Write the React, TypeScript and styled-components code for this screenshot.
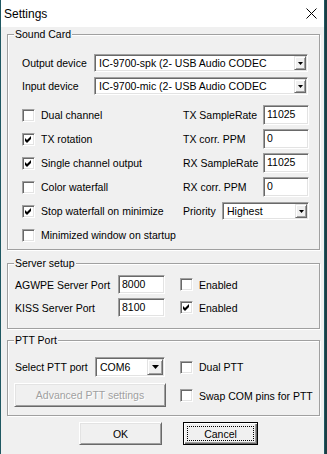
import styled, { createGlobalStyle } from 'styled-components'

const GlobalStyle = createGlobalStyle`
  html, body {
    margin: 0;
    padding: 0;
    background: #1b3d43;
  }
  body {
    font-family: "Liberation Sans", Arial, sans-serif;
    font-size: 10.5px;
    color: #000;
  }
`

const Window = styled.div`
  width: 323px;
  height: 454px;
  border-left: 1px solid #1f5862;
  border-right: 1px solid #1f5862;
  background: #f0f0f0;
  display: flex;
  flex-direction: column;
  overflow: hidden;
`

const TitleBar = styled.div`
  flex: none;
  height: 27px;
  background: #fff;
  display: flex;
  align-items: center;
  justify-content: space-between;
  padding: 0 7px 0 3px;
`

const Title = styled.span`
  font-size: 12px;
`

const Body = styled.div`
  padding: 1px 0 0 6px;
  display: flex;
  flex-direction: column;
`

const Group = styled.fieldset<{ gapTop?: number }>`
  width: 311px;
  margin: ${p => p.gapTop ?? 0}px 0 0 0;
  padding: 0;
  min-width: 0;
  border: 1px solid #a0a0a0;
  box-shadow: inset 1px 1px 0 #fff, 1px 1px 0 #fff;
`

const Legend = styled.legend`
  margin-left: 6px;
  padding: 0 1px;
  line-height: 13px;
  background: #f0f0f0;
`

const SoundBody = styled.div`
  padding: 13px 11px 2px 14px;
  display: flex;
  flex-direction: column;
  gap: 5px;
`

const DeviceRow = styled.div`
  display: flex;
  align-items: center;
`

const FieldLabel = styled.span<{ w?: number }>`
  width: ${p => (p.w ? `${p.w}px` : 'auto')};
  flex: none;
  white-space: nowrap;
`

const OptionGrid = styled.div`
  margin-top: 3px;
  display: grid;
  grid-template-columns: 161px 39px 41px 45px;
  grid-auto-rows: 24px;
  align-items: center;
`

const RightLabel = styled(FieldLabel)`
  grid-column: 2 / span 2;
`

const PriorityLabel = styled(FieldLabel)`
  grid-column: 2;
`

const PriorityCell = styled.div`
  grid-column: 3 / span 2;
`

const CheckRow = styled.label`
  display: flex;
  align-items: center;
  gap: 6px;
  height: 13px;
  white-space: nowrap;
`

const Box = styled.span`
  width: 11px;
  height: 11px;
  flex: none;
  background: #fff;
  border: 1px solid;
  border-color: #a0a0a0 #fff #fff #a0a0a0;
  box-shadow: inset 1px 1px 0 #696969, inset -1px -1px 0 #e3e3e3;
  display: flex;
  align-items: center;
  justify-content: center;
`

const Edit = styled.div<{ w: number; h?: number }>`
  width: ${p => p.w - 5}px;
  height: ${p => (p.h ?? 20) - 4}px;
  box-sizing: content-box;
  padding: 1px 0 1px 3px;
  background: #fff;
  border: 1px solid;
  border-color: #a0a0a0 #fff #fff #a0a0a0;
  box-shadow: inset 1px 1px 0 #696969, inset -1px -1px 0 #e3e3e3;
  line-height: 14px;
  white-space: nowrap;
  overflow: hidden;
`

const Combo = styled.div<{ w: number; h?: number }>`
  width: ${p => p.w - 4}px;
  height: ${p => (p.h ?? 18) - 4}px;
  box-sizing: content-box;
  padding: 1px;
  background: #fff;
  border: 1px solid;
  border-color: #a0a0a0 #fff #fff #a0a0a0;
  box-shadow: inset 1px 1px 0 #696969, inset -1px -1px 0 #e3e3e3;
  display: flex;
  align-items: center;
`

const ComboText = styled.span`
  flex: 1;
  padding-left: 3px;
  white-space: nowrap;
  overflow: hidden;
`

const DropButton = styled.span<{ big?: boolean }>`
  flex: none;
  align-self: stretch;
  width: ${p => (p.big ? 14 : 10)}px;
  background: #f0f0f0;
  border: 1px solid;
  border-color: #e3e3e3 #696969 #696969 #e3e3e3;
  box-shadow: inset 1px 1px 0 #fff, inset -1px -1px 0 #a0a0a0;
  display: flex;
  align-items: center;
  justify-content: center;
`

const ServerBody = styled.div`
  padding: 3px 0 9px 7px;
  display: grid;
  grid-template-columns: 103px 62px auto;
  grid-auto-rows: 23px;
  align-items: center;
`

const PttBody = styled.div`
  padding: 9px 0 8px 7px;
  display: grid;
  grid-template-columns: 165px auto;
  grid-template-rows: 22px 24px;
  row-gap: 5px;
  align-items: center;
`

const PortCell = styled.div`
  display: flex;
  align-items: center;
`

const TopCheck = styled.div`
  align-self: start;
  padding-top: 6px;
`

const PushButton = styled.button<{ w: number; h?: number; focused?: boolean }>`
  width: ${p => p.w}px;
  height: ${p => p.h ?? 23}px;
  margin: 0;
  padding: 0;
  font-family: "Liberation Sans", Arial, sans-serif;
  font-size: 10.5px;
  color: #000;
  background: #f0f0f0;
  border: 1px solid;
  border-color: ${p => (p.focused ? '#000' : '#fff #696969 #696969 #fff')};
  box-shadow: ${p =>
    p.focused
      ? 'inset 1px 1px 0 #fff, inset -1px -1px 0 #696969, inset -2px -2px 0 #a0a0a0'
      : 'inset 1px 1px 0 #e3e3e3, inset -1px -1px 0 #a0a0a0'};
  outline: ${p => (p.focused ? '1px dotted #000' : 'none')};
  outline-offset: -5px;

  &:disabled {
    color: #a0a0a0;
    text-shadow: 1px 1px 0 #fff;
  }
`

const AdvancedButton = styled(PushButton)`
  margin-left: -1px;
`

const ButtonRow = styled.div`
  margin-top: 6px;
  padding-left: 72px;
  display: flex;
  gap: 21px;
`

const Check = ({ on }: { on?: boolean }) => (
  <Box>
    {on && (
      <svg width="7" height="7" viewBox="0 0 7 7">
        <polygon points="0,2 2,4 6,0 6,3 2,7 0,5" fill="#000" />
      </svg>
    )}
  </Box>
)

const CheckItem = ({ on, children }: { on?: boolean; children: string }) => (
  <CheckRow>
    <Check on={on} />
    <span>{children}</span>
  </CheckRow>
)

const Arrow = ({ big }: { big?: boolean }) =>
  big ? (
    <svg width="7" height="4" viewBox="0 0 7 4">
      <polygon points="0,0 7,0 3.5,4" fill="#000" />
    </svg>
  ) : (
    <svg width="5" height="3" viewBox="0 0 5 3">
      <polygon points="0,0 5,0 2.5,3" fill="#000" />
    </svg>
  )

const Select = ({ w, h, value, big }: { w: number; h?: number; value: string; big?: boolean }) => (
  <Combo w={w} h={h}>
    <ComboText>{value}</ComboText>
    <DropButton big={big}>
      <Arrow big={big} />
    </DropButton>
  </Combo>
)

export default function App() {
  return (
    <>
      <GlobalStyle />
      <Window>
        <TitleBar>
          <Title>Settings</Title>
          <svg width="11" height="11" viewBox="0 0 11 11">
            <path d="M0.5 0.5 L10.5 10.5 M10.5 0.5 L0.5 10.5" stroke="#000" strokeWidth="1" />
          </svg>
        </TitleBar>
        <Body>
          <Group>
            <Legend>Sound Card</Legend>
            <SoundBody>
              <DeviceRow>
                <FieldLabel w={72}>Output device</FieldLabel>
                <Select w={214} value="IC-9700-spk (2- USB Audio CODEC" />
              </DeviceRow>
              <DeviceRow>
                <FieldLabel w={72}>Input device</FieldLabel>
                <Select w={214} value="IC-9700-mic (2- USB Audio CODEC" />
              </DeviceRow>
              <OptionGrid>
                <CheckItem>Dual channel</CheckItem>
                <RightLabel>TX SampleRate</RightLabel>
                <Edit w={46}>11025</Edit>

                <CheckItem on>TX rotation</CheckItem>
                <RightLabel>TX corr. PPM</RightLabel>
                <Edit w={46}>0</Edit>

                <CheckItem on>Single channel output</CheckItem>
                <RightLabel>RX SampleRate</RightLabel>
                <Edit w={46}>11025</Edit>

                <CheckItem>Color waterfall</CheckItem>
                <RightLabel>RX corr. PPM</RightLabel>
                <Edit w={46}>0</Edit>

                <CheckItem on>Stop waterfall on minimize</CheckItem>
                <PriorityLabel>Priority</PriorityLabel>
                <PriorityCell>
                  <Select w={87} value="Highest" />
                </PriorityCell>

                <CheckItem>Minimized window on startup</CheckItem>
              </OptionGrid>
            </SoundBody>
          </Group>

          <Group gapTop={7}>
            <Legend>Server setup</Legend>
            <ServerBody>
              <FieldLabel>AGWPE Server Port</FieldLabel>
              <Edit w={47} h={19}>8000</Edit>
              <CheckItem>Enabled</CheckItem>

              <FieldLabel>KISS Server Port</FieldLabel>
              <Edit w={47} h={19}>8100</Edit>
              <CheckItem on>Enabled</CheckItem>
            </ServerBody>
          </Group>

          <Group gapTop={5}>
            <Legend>PTT Port</Legend>
            <PttBody>
              <PortCell>
                <FieldLabel w={80}>Select PTT port</FieldLabel>
                <Select w={70} h={20} value="COM6" big />
              </PortCell>
              <CheckItem>Dual PTT</CheckItem>

              <AdvancedButton w={152} h={24} disabled>
                Advanced PTT settings
              </AdvancedButton>
              <TopCheck>
                <CheckItem>Swap COM pins for PTT</CheckItem>
              </TopCheck>
            </PttBody>
          </Group>

          <ButtonRow>
            <PushButton w={83}>OK</PushButton>
            <PushButton w={75} focused>
              Cancel
            </PushButton>
          </ButtonRow>
        </Body>
      </Window>
    </>
  )
}
